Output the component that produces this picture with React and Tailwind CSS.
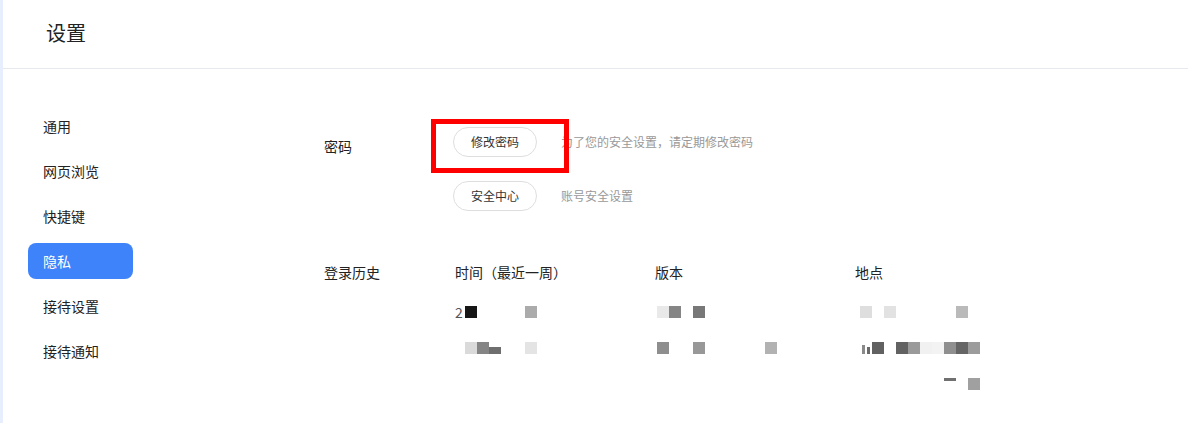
import { useState } from "react";

const menu = ["通用", "网页浏览", "快捷键", "隐私", "接待设置", "接待通知"];

// pixelated (masked) cells of the login history, 12px tiles per slot
const history = [
  {
    lead: "2",
    time: ["h-3 bg-[#161616]", "", "", "", "", "h-3 bg-[#ababab]"],
    version: ["h-3 bg-[#e9e9e9]", "h-3 bg-[#858585]", "", "h-3 bg-[#787878]"],
    place: ["h-3 bg-[#dedede]", "", "h-3 bg-[#e2e2e2]", "", "", "", "", "", "h-3 bg-[#bababa]"],
  },
  {
    lead: "",
    time: ["h-3 bg-[#dadada]", "h-3 bg-[#858585]", "h-[7px] mt-[5px] bg-[#6e6e6e]", "", "", "h-3 bg-[#e4e4e4]"],
    version: ["h-3 bg-[#8e8e8e]", "", "", "h-3 bg-[#989898]", "", "", "", "", "", "h-3 bg-[#b2b2b2]"],
    place: [
      "mark",
      "h-3 bg-[#616161]",
      "",
      "h-3 bg-[#626262]",
      "h-3 bg-[#9a9a9a]",
      "h-3 bg-[#f1f1f1]",
      "h-3 bg-[#f3f3f3]",
      "h-3 bg-[#8f8f8f]",
      "h-3 bg-[#656565]",
      "h-3 bg-[#9c9c9c]",
    ],
  },
  {
    lead: "",
    time: [],
    version: [],
    place: ["", "", "", "", "", "", "", "h-[3px] bg-[#707070]", "", "h-3 bg-[#a0a0a0]"],
  },
];

function Tiles({ slots }) {
  return (
    <div className="flex items-start h-3">
      {slots.map((cls, i) =>
        cls === "mark" ? (
          <span key={i} className="w-3 h-3 flex items-end gap-[2px] pl-[2px]">
            <span className="w-[3px] h-[9px] bg-[#8a8a8a]" />
            <span className="w-[3px] h-[7px] bg-[#6a6a6a]" />
          </span>
        ) : (
          <span key={i} className={"w-3 " + (cls || "h-3")} />
        )
      )}
    </div>
  );
}

function PwdRow({ label, desc, boxed }) {
  return (
    <div className="flex items-center">
      <div className="relative">
        <button className="w-[84px] h-[30px] rounded-full border border-[#dedede] bg-white text-xs text-[#333]">
          {label}
        </button>
        {boxed && (
          <div className="absolute -left-[22px] -top-2 w-[138px] h-[54px] border-[5px] border-[#ff0000] pointer-events-none" />
        )}
      </div>
      <span className="ml-6 text-xs text-[#999]">{desc}</span>
    </div>
  );
}

export default function App() {
  const [active, setActive] = useState("隐私");

  return (
    <div
      className="flex w-[1188px] h-[423px] bg-white text-[#222] overflow-hidden"
      style={{ fontFamily: '"Noto Sans CJK SC", "Noto Sans", sans-serif' }}
    >
      <div className="w-[3px] bg-[#e7effe] shrink-0" />
      <div className="flex-1 flex flex-col">
        <div className="h-[69px] flex items-center pl-[43px] pb-[3px] border-b border-[#e6e9ee] text-xl">
          设置
        </div>

        <div className="flex flex-1">
          {/* side menu */}
          <div className="w-[321px] shrink-0 pl-[25px] pt-[39px] flex flex-col gap-[9px]">
            {menu.map((m) => (
              <div
                key={m}
                onClick={() => setActive(m)}
                className={
                  "w-[105px] h-9 rounded-lg px-[15px] flex items-center text-sm cursor-pointer " +
                  (active === m ? "bg-[#3f83fb] text-white" : "")
                }
              >
                {m}
              </div>
            ))}
          </div>

          {/* privacy panel */}
          <div className="flex-1 pt-[58px]">
            <div className="flex">
              <div className="w-[129px] pt-[9px] text-sm leading-5">密码</div>
              <div className="flex flex-col gap-6">
                <PwdRow label="修改密码" desc="为了您的安全设置，请定期修改密码" boxed />
                <PwdRow label="安全中心" desc="账号安全设置" />
              </div>
            </div>

            <div className="flex mt-[51px]">
              <div className="w-[131px] text-sm leading-5">登录历史</div>
              <div className="flex flex-col">
                <div className="flex text-sm leading-5">
                  <div className="w-[200px]">时间（最近一周）</div>
                  <div className="w-[200px]">版本</div>
                  <div className="w-[200px]">地点</div>
                </div>
                <div className="mt-[12px] flex flex-col">
                  {history.map((row, i) => (
                    <div key={i} className="flex h-9 items-center">
                      <div className="w-[200px] flex items-center">
                        <span className="w-[10px] text-sm text-[#555] leading-3">{row.lead}</span>
                        <Tiles slots={row.time} />
                      </div>
                      <div className="w-[200px] pl-[2px]">
                        <Tiles slots={row.version} />
                      </div>
                      <div className="w-[200px] pl-[5px]">
                        <Tiles slots={row.place} />
                      </div>
                    </div>
                  ))}
                </div>
              </div>
            </div>
          </div>
        </div>
      </div>
    </div>
  );
}
